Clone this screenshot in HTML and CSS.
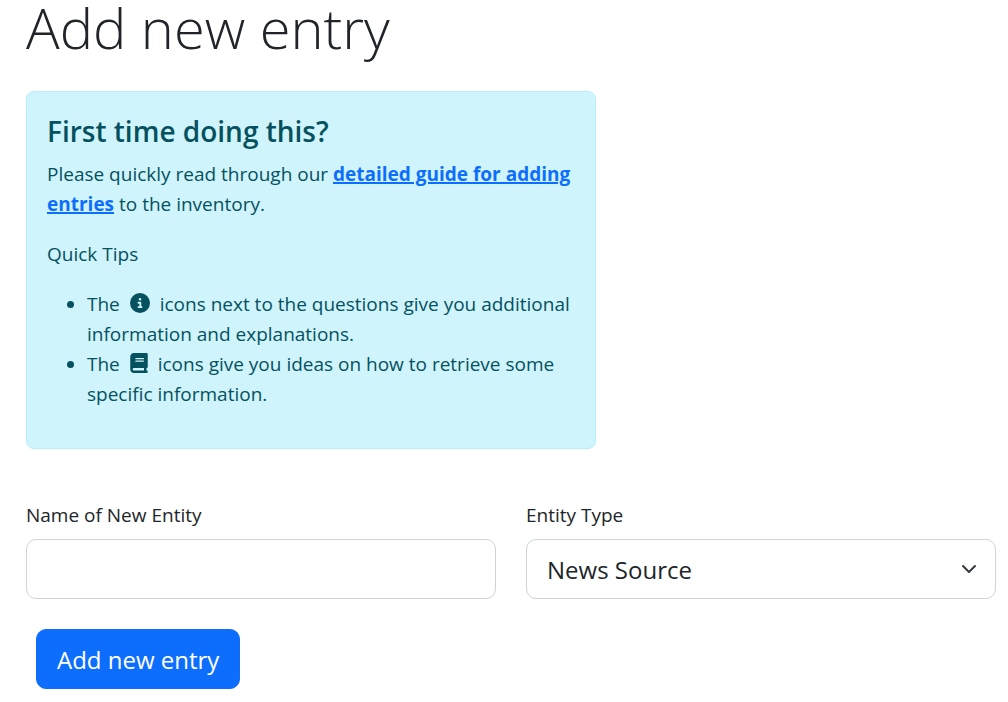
FILE: index.html
```html
<!DOCTYPE html>
<html lang="en">
<head>
<meta charset="utf-8">
<meta name="viewport" content="width=device-width, initial-scale=1">
<title>Add new entry</title>
<link rel="stylesheet" href="styles.css">
</head>
<body>
<main class="page">
  <h1 class="page-title">Add new entry</h1>

  <section class="alert">
    <h2 class="alert-title">First time doing this?</h2>
    <p class="alert-text">Please quickly read through our <a class="alert-link" href="#guide">detailed guide for adding entries</a> to the inventory.</p>
    <p class="alert-text">Quick Tips</p>
    <ul class="tips">
      <li>The <svg class="icon icon-info" viewBox="0 0 512 512" aria-hidden="true"><path fill="currentColor" d="M256 512A256 256 0 1 0 256 0a256 256 0 1 0 0 512zM216 336h24V272H216c-13.300 0-24-10.700-24-24s10.700-24 24-24h48c13.300 0 24 10.700 24 24v88h8c13.300 0 24 10.700 24 24s-10.700 24-24 24H216c-13.300 0-24-10.700-24-24s10.700-24 24-24zm40-208a32 32 0 1 1 0 64 32 32 0 1 1 0-64z"/></svg> icons next to the questions give you additional information and explanations.</li>
      <li>The <svg class="icon icon-book" viewBox="0 0 448 512" aria-hidden="true"><path fill="currentColor" d="M96 0C43 0 0 43 0 96V416c0 53 43 96 96 96H384h32c17.700 0 32-14.300 32-32s-14.300-32-32-32V384c17.700 0 32-14.300 32-32V32c0-17.700-14.300-32-32-32H384 96zm0 384H352v64H96c-17.700 0-32-14.300-32-32s14.300-32 32-32zm32-240c0-8.800 7.200-16 16-16H336c8.800 0 16 7.200 16 16s-7.200 16-16 16H144c-8.800 0-16-7.200-16-16zm16 48H336c8.800 0 16 7.200 16 16s-7.200 16-16 16H144c-8.800 0-16-7.200-16-16s7.200-16 16-16z"/></svg> icons give you ideas on how to retrieve some specific information.</li>
    </ul>
  </section>

  <form class="entry-form">
    <div class="fields">
      <div class="field">
        <label class="field-label" for="entity-name">Name of New Entity</label>
        <input class="control" id="entity-name" type="text">
      </div>
      <div class="field">
        <label class="field-label" for="entity-type">Entity Type</label>
        <div class="select-wrap">
          <select class="control control-select" id="entity-type">
            <option>News Source</option>
          </select>
          <svg class="chevron" viewBox="0 0 16 16" aria-hidden="true"><path fill="none" stroke="#343a40" stroke-linecap="round" stroke-linejoin="round" stroke-width="2" d="m2 5 6 6 6-6"/></svg>
        </div>
      </div>
    </div>
    <button class="submit" type="button">Add new entry</button>
  </form>
</main>
</body>
</html>
```
FILE: styles.css
```css
*,
*::before,
*::after {
  box-sizing: border-box;
}

body {
  margin: 0;
  background: #fff;
  color: #212529;
  font-family: "Open Sans", "Noto Sans", sans-serif;
  font-size: 19px;
  line-height: 30px;
}

.page {
  padding: 0 12px 12px 26px;
}

.page-title {
  margin: 0 0 36px;
  font-size: 56px;
  font-weight: 300;
  line-height: 55px;
}

.alert {
  max-width: 570px;
  margin-bottom: 51px;
  padding: 20px;
  border: 1px solid #b6effb;
  border-radius: 8px;
  background: #cff4fc;
  color: #055160;
}

.alert-title {
  margin: 3px 0 12px;
  font-size: 28px;
  font-weight: 600;
  line-height: 32px;
}

.alert-text {
  margin: 0 0 20px;
}

.alert-link {
  color: #0d6efd;
  font-weight: 700;
  text-decoration-thickness: 2px;
}

.tips {
  margin: 0 0 19px;
  padding-left: 40px;
}

.icon {
  height: 20px;
  margin: 0 5px;
  vertical-align: -2px;
}

.icon-info {
  width: 20px;
}

.icon-book {
  width: 18px;
}

.fields {
  display: grid;
  grid-template-columns: 1fr 1fr;
  gap: 30px;
}

.field-label {
  display: block;
  margin-bottom: 9px;
}

.control {
  display: block;
  width: 100%;
  height: 60px;
  padding: 2px 20px 0;
  border: 1px solid #ced4da;
  border-radius: 10px;
  background: #fff;
  color: #212529;
  font: inherit;
  font-size: 24px;
}

.control-select {
  appearance: none;
}

.select-wrap {
  position: relative;
}

.chevron {
  position: absolute;
  top: 22px;
  right: 19px;
  width: 16px;
  height: 16px;
  pointer-events: none;
}

.submit {
  height: 60px;
  margin: 30px 10px 0;
  padding: 2px 20px 0;
  border: 1px solid #0d6efd;
  border-radius: 10px;
  background: #0d6efd;
  color: #fff;
  font: inherit;
  font-size: 24px;
}
```
